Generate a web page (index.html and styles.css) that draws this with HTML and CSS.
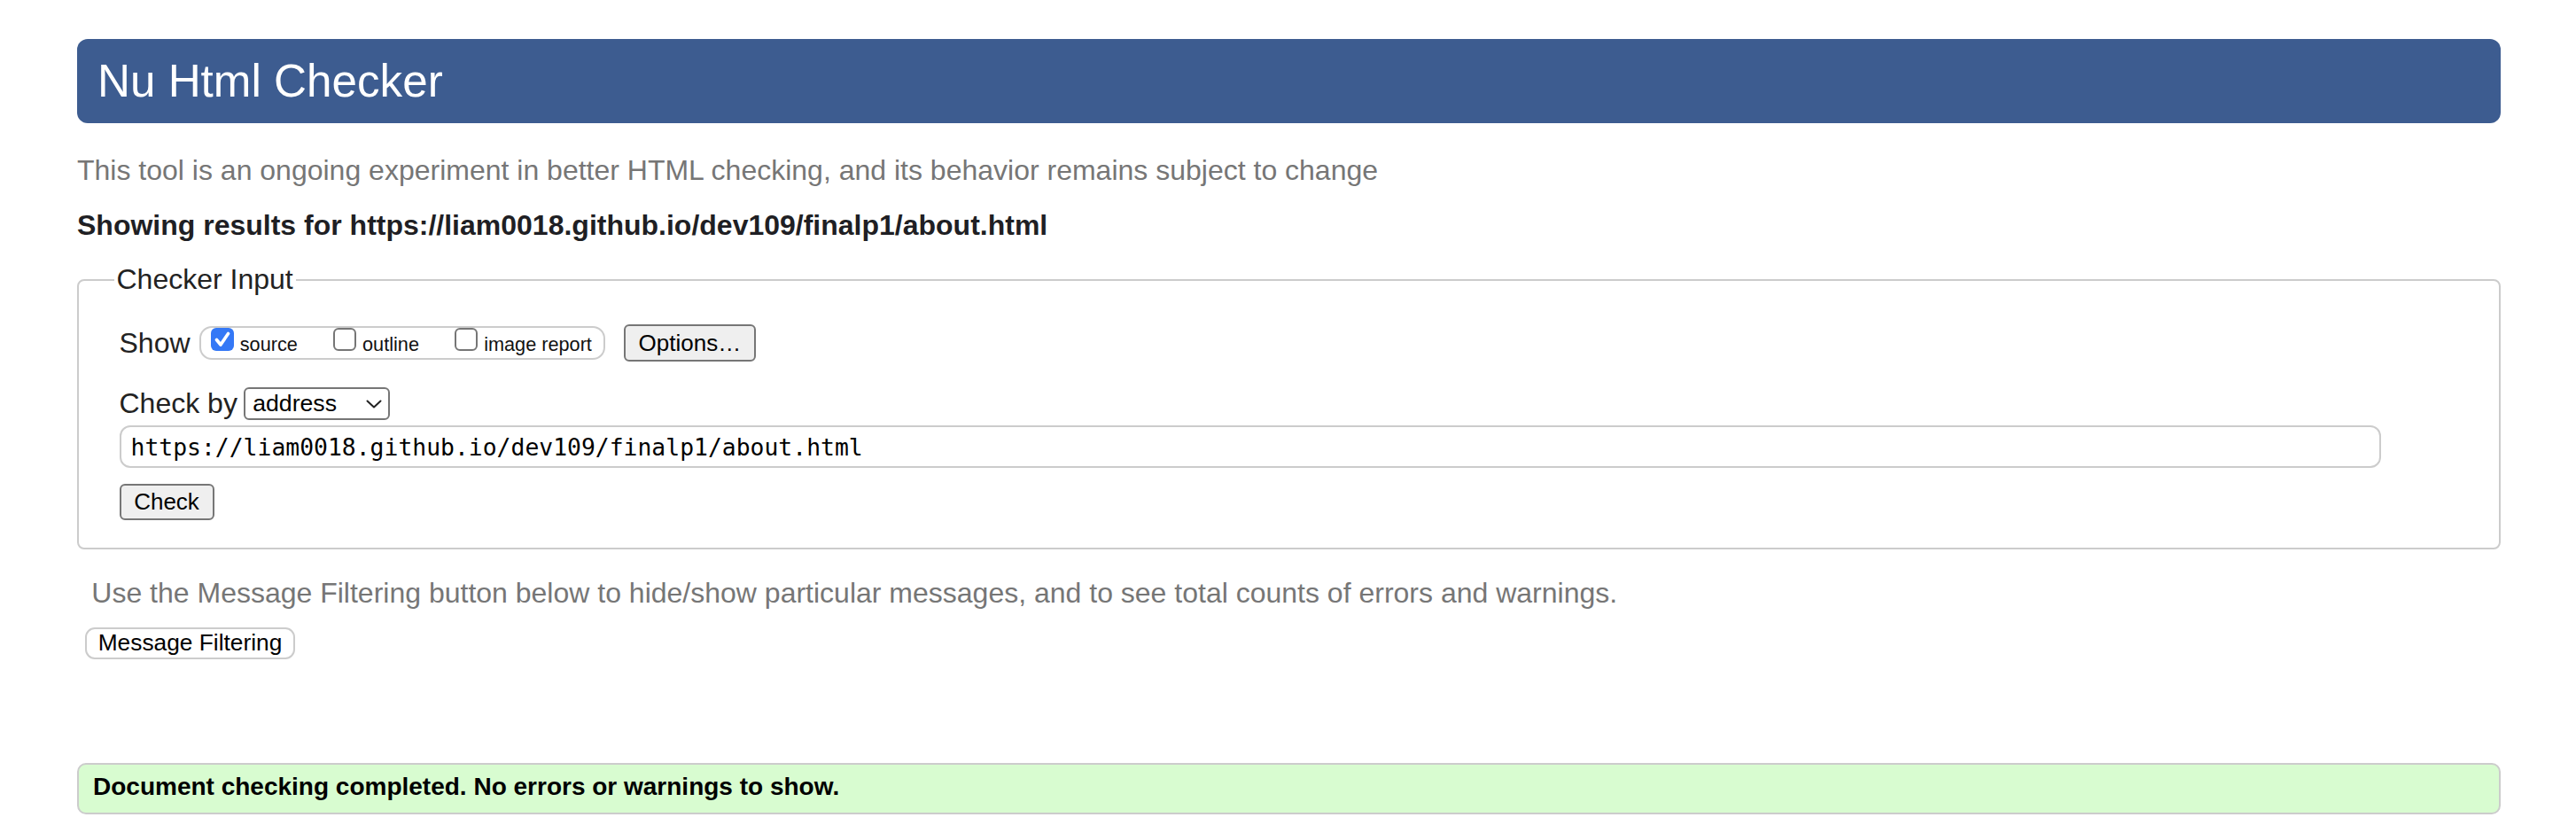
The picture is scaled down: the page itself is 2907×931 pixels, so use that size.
FILE: index.html
```html
<!DOCTYPE html>
<html lang="en">
<head>
<meta charset="utf-8">
<title>Nu Html Checker</title>
<link rel="stylesheet" href="styles.css">
</head>
<body>
<div class="page">
  <header class="masthead"><h1 class="title">Nu Html Checker</h1></header>
  <p class="intro">This tool is an ongoing experiment in better HTML checking, and its behavior remains subject to change</p>
  <p class="showing">Showing results for https://liam0018.github.io/dev109/finalp1/about.html</p>

  <fieldset class="checker">
    <legend class="legend">Checker Input</legend>
    <div class="row show-row">
      <span class="lbl">Show</span>
      <span class="group">
        <span class="opt">
          <span class="cb cb-on"><svg viewBox="0 0 26 26" width="26" height="26"><path d="M6.5 13.5 L11 19 L19.5 6.5" fill="none" stroke="#fff" stroke-width="3.6" stroke-linecap="round" stroke-linejoin="round"/></svg></span>
          <span class="opt-text">source</span>
        </span>
        <span class="opt">
          <span class="cb"></span>
          <span class="opt-text">outline</span>
        </span>
        <span class="opt">
          <span class="cb"></span>
          <span class="opt-text">image report</span>
        </span>
      </span>
      <button class="btn btn-options" type="button">Options…</button>
    </div>
    <div class="row by-row">
      <span class="lbl">Check by</span>
      <span class="select">
        <span class="select-text">address</span>
        <svg class="chev" viewBox="0 0 18 10" width="18" height="10"><path d="M1.5 1.5 L9 8.5 L16.5 1.5" fill="none" stroke="#222" stroke-width="2" stroke-linecap="round" stroke-linejoin="round"/></svg>
      </span>
    </div>
    <div class="url">https://liam0018.github.io/dev109/finalp1/about.html</div>
    <button class="btn btn-check" type="button">Check</button>
  </fieldset>

  <p class="filter-note">Use the Message Filtering button below to hide/show particular messages, and to see total counts of errors and warnings.</p>
  <button class="filter-btn" type="button">Message Filtering</button>

  <div class="success">Document checking completed. No errors or warnings to show.</div>
</div>
</body>
</html>
```
FILE: styles.css
```css
html, body {
  margin: 0;
  padding: 0;
  background: #ffffff;
}

body {
  font-family: "Liberation Sans", Arial, Helvetica, sans-serif;
  color: #222222;
}

.page {
  padding: 44px 85px 0 87px;
}

.masthead {
  height: 95px;
  background: #3d5c90;
  border-radius: 12px;
  padding-left: 23px;
}

.title {
  margin: 0;
  font-size: 51.2px;
  font-weight: normal;
  line-height: 95px;
  color: #ffffff;
}

.intro {
  margin: 35px 0 0 0;
  font-size: 32px;
  line-height: 37px;
  color: #767676;
}

.showing {
  margin: 25px 0 0 0;
  font-size: 32px;
  line-height: 37px;
  font-weight: bold;
  color: #1f1f24;
}

.checker {
  margin: 24px 0 0 0;
  border: 2px solid #cccccc;
  border-radius: 8px;
  padding: 32px 45px 30.5px 45.5px;
  min-width: 0;
}

.legend {
  font-size: 32px;
  line-height: 37px;
  padding: 0 3px;
  margin-left: -6px;
  color: #222222;
}

.row {
  display: flex;
  align-items: center;
}

.show-row {
  height: 42px;
}

.by-row {
  margin-top: 29px;
  height: 37px;
}

.lbl {
  font-size: 32px;
  line-height: 37px;
  color: #222222;
}

.group {
  display: flex;
  align-items: flex-start;
  box-sizing: border-box;
  height: 38.4px;
  margin-left: 10px;
  border: 2px solid #cccccc;
  border-radius: 14px;
  padding: 0 13px 0 11.5px;
}

.opt {
  display: flex;
  align-items: baseline;
}

.opt + .opt {
  margin-left: 40.5px;
}

.cb {
  display: block;
  box-sizing: border-box;
  width: 26px;
  height: 26px;
  border: 2px solid #767676;
  border-radius: 6px;
  background: #ffffff;
}

.cb-on {
  border: none;
  background: #3478f6;
}

.cb-on svg {
  display: block;
}

.opt-text {
  margin-left: 6.7px;
  font-size: 21.7px;
  line-height: 24px;
  color: #111111;
}

.btn {
  box-sizing: border-box;
  font-family: "Liberation Sans", Arial, Helvetica, sans-serif;
  font-size: 26px;
  color: #000000;
  background: #efefef;
  border: 2px solid #767676;
  border-radius: 6px;
  padding: 0;
  margin: 0;
}

.btn-options {
  width: 149px;
  height: 41.6px;
  margin-left: 21px;
}

.select {
  box-sizing: border-box;
  display: flex;
  align-items: center;
  justify-content: space-between;
  width: 165px;
  height: 36.4px;
  margin-left: 7.6px;
  border: 2px solid #767676;
  border-radius: 6px;
  padding: 0 7.6px 0 7.7px;
  background: #ffffff;
}

.select-text {
  font-size: 26.67px;
  line-height: 30px;
  color: #000000;
}

.chev {
  display: block;
  margin-top: 2px;
}

.url {
  box-sizing: border-box;
  width: calc(100% - 88px);
  height: 48.3px;
  margin-top: 6px;
  border: 2px solid #cccccc;
  border-radius: 12px;
  padding-left: 11px;
  font-family: "DejaVu Sans Mono", "Liberation Mono", monospace;
  font-size: 26.4px;
  line-height: 45px;
  color: #000000;
}

.btn-check {
  display: block;
  width: 107px;
  height: 41.3px;
  margin-top: 17.7px;
}

.filter-note {
  margin: 31px 0 0 16.3px;
  font-size: 32px;
  line-height: 37px;
  color: #767676;
}

.filter-btn {
  display: block;
  box-sizing: border-box;
  width: 237px;
  height: 36.6px;
  margin: 19.8px 0 0 9px;
  padding: 0;
  font-family: "Liberation Sans", Arial, Helvetica, sans-serif;
  font-size: 26.3px;
  color: #000000;
  background: #ffffff;
  border: 2px solid #cccccc;
  border-radius: 11px;
}

.success {
  box-sizing: border-box;
  height: 58px;
  margin-top: 117px;
  border: 2px solid #cccccc;
  border-radius: 10px;
  background: #d8fcd0;
  padding: 9px 0 0 16px;
  font-size: 28px;
  line-height: 32px;
  font-weight: bold;
  color: #000000;
}
```
